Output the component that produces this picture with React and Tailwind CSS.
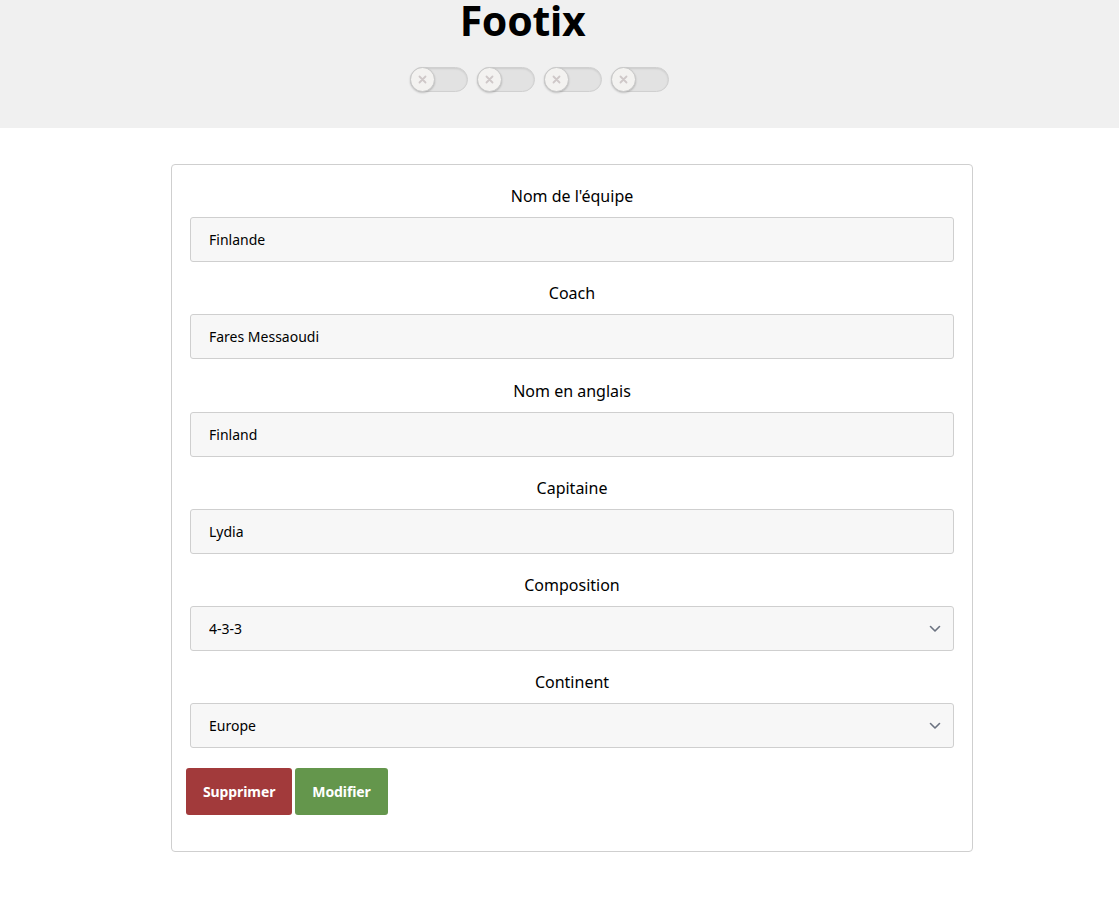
import { useState } from "react";

const fields = [
  { label: "Nom de l'équipe", value: "Finlande" },
  { label: "Coach", value: "Fares Messaoudi" },
  { label: "Nom en anglais", value: "Finland" },
  { label: "Capitaine", value: "Lydia" },
];

const selects = [
  { label: "Composition", value: "4-3-3", options: ["4-3-3", "4-4-2", "3-5-2", "4-2-3-1"] },
  { label: "Continent", value: "Europe", options: ["Europe", "Afrique", "Asie", "Amérique", "Océanie"] },
];

const Toggle = () => (
  <div className="relative w-[58px] h-[25px] rounded-full bg-[#e2e2e2] border border-[#d0d0d0] shadow-[inset_0_1px_2px_rgba(0,0,0,0.1)]">
    <div className="absolute left-[-1px] top-[-1px] w-[25px] h-[25px] rounded-full bg-[#f3f2f0] border border-[#c8c8c8] shadow-[0_1px_2px_rgba(0,0,0,0.2)] flex items-center justify-center">
      <svg width="9" height="9" viewBox="0 0 9 9">
        <path d="M1.5 1.5 L7.5 7.5 M7.5 1.5 L1.5 7.5" stroke="#cfc8c8" strokeWidth="1.8" strokeLinecap="round" />
      </svg>
    </div>
  </div>
);

const Chevron = () => (
  <svg
    className="pointer-events-none absolute right-[13px] top-1/2 -translate-y-1/2"
    width="12"
    height="8"
    viewBox="0 0 12 8"
  >
    <path d="M1.5 1.5 L6 6 L10.5 1.5" fill="none" stroke="#6b7280" strokeWidth="1.6" strokeLinecap="round" strokeLinejoin="round" />
  </svg>
);

const App = () => {
  const [values, setValues] = useState(fields.map((f) => f.value));
  const [choices, setChoices] = useState(selects.map((s) => s.value));

  return (
    <div className="min-h-screen bg-white text-black font-['Noto_Sans','Open_Sans',sans-serif]">
      <header className="h-[128px] bg-[#f0f0f0] flex flex-col items-center">
        <h1 className="ml-[-74px] text-[41px] font-bold leading-[40px] tracking-[-0.3px]">
          Footix
        </h1>
        <div className="ml-[-41px] mt-[27px] flex gap-[9px]">
          <Toggle />
          <Toggle />
          <Toggle />
          <Toggle />
        </div>
      </header>

      <div className="w-[802px] ml-[171px] mt-[36px] border border-[#cfcfcf] rounded-[4px] pt-[19px] pb-[36px] px-[18px]">
        {fields.map((f, i) => (
          <div key={f.label} className="mb-[19.3px]">
            <label className="block text-center text-[16px] leading-[24px] mb-[9px]">{f.label}</label>
            <input
              value={values[i]}
              onChange={(e) => {
                const next = [...values];
                next[i] = e.target.value;
                setValues(next);
              }}
              className="w-full h-[45px] bg-[#f7f7f7] border border-[#cfcfcf] rounded-[3px] px-[18px] text-[14px] outline-none"
            />
          </div>
        ))}
        {selects.map((s, i) => (
          <div key={s.label} className="mb-[19.3px] last:mb-[18px]">
            <label className="block text-center text-[16px] leading-[24px] mb-[9px]">{s.label}</label>
            <div className="relative">
              <select
                value={choices[i]}
                onChange={(e) => {
                  const next = [...choices];
                  next[i] = e.target.value;
                  setChoices(next);
                }}
                className="appearance-none w-full h-[45px] bg-[#f7f7f7] border border-[#cfcfcf] rounded-[3px] px-[18px] text-[14px] outline-none"
              >
                {s.options.map((o) => (
                  <option key={o}>{o}</option>
                ))}
              </select>
              <Chevron />
            </div>
          </div>
        ))}
        <div className="flex gap-[3px] ml-[-4px]">
          <button className="h-[47px] px-[17px] bg-[#a23a3b] text-white text-[14px] font-bold rounded-[3px] tracking-[-0.1px]">
            Supprimer
          </button>
          <button className="h-[47px] px-[17px] bg-[#64964c] text-white text-[14px] font-bold rounded-[3px] tracking-[-0.1px]">
            Modifier
          </button>
        </div>
      </div>
    </div>
  );
};

export default App;
